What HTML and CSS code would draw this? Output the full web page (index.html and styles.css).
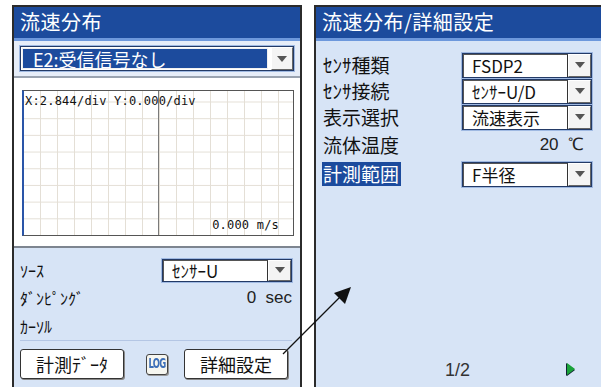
FILE: index.html
```html
<!DOCTYPE html>
<html lang="ja">
<head>
  <meta charset="UTF-8" />
  <meta name="viewport" content="width=device-width, initial-scale=1.0" />
  <title>流速分布</title>
  <link rel="stylesheet" href="styles.css">
</head>
<body>
  <div class="screens">
    <div class="panel left">
      <div class="title">流速分布</div>
      <div class="error-row">
        <div class="combo wide">
          <span class="combo-text selected">E2:受信信号なし</span>
          <span class="combo-btn"><i class="tri"></i></span>
        </div>
      </div>
      <div class="graph-area">
        <div class="graph">
          <span class="scale">X:2.844/div Y:0.000/div</span>
          <span class="reading">0.000 m/s</span>
        </div>
      </div>
      <div class="settings">
        <div class="row">
          <span class="label">ｿｰｽ</span>
          <div class="combo small">
            <span class="combo-text">ｾﾝｻｰU</span>
            <span class="combo-btn"><i class="tri"></i></span>
          </div>
        </div>
        <div class="row">
          <span class="label">ﾀﾞﾝﾋﾟﾝｸﾞ</span>
          <span class="value">0&nbsp; sec</span>
        </div>
        <div class="row">
          <span class="label">ｶｰｿﾙ</span>
        </div>
        <div class="buttons">
          <button class="key">計測ﾃﾞｰﾀ</button>
          <span class="log"><span>LOG</span></span>
          <button class="key">詳細設定</button>
        </div>
      </div>
    </div>

    <div class="panel right">
      <div class="title">流速分布/詳細設定</div>
      <div class="detail">
        <div class="field">
          <span class="label big">ｾﾝｻ種類</span>
          <div class="combo">
            <span class="combo-text">FSDP2</span>
            <span class="combo-btn"><i class="tri"></i></span>
          </div>
        </div>
        <div class="field">
          <span class="label big">ｾﾝｻ接続</span>
          <div class="combo">
            <span class="combo-text">ｾﾝｻｰU/D</span>
            <span class="combo-btn"><i class="tri"></i></span>
          </div>
        </div>
        <div class="field">
          <span class="label big">表示選択</span>
          <div class="combo">
            <span class="combo-text">流速表示</span>
            <span class="combo-btn"><i class="tri"></i></span>
          </div>
        </div>
        <div class="field temp">
          <span class="label big">流体温度</span>
          <span class="value">20&nbsp; ℃</span>
        </div>
        <div class="field range">
          <span class="label big focus">計測範囲</span>
          <div class="combo">
            <span class="combo-text">F半径</span>
            <span class="combo-btn"><i class="tri"></i></span>
          </div>
        </div>
      </div>
      <div class="pager">
        <span class="page">1/2</span>
        <span class="next"></span>
      </div>
    </div>
  </div>

  <svg class="arrow" width="601" height="387" viewBox="0 0 601 387">
    <line x1="283" y1="354" x2="342" y2="295" stroke="#111" stroke-width="1.2" />
    <polygon points="351,287 334,293 345,304" fill="#111" />
  </svg>
</body>
</html>
```

FILE: styles.css
```css
* {
  box-sizing: border-box;
}

body {
  margin: 0;
  width: 601px;
  height: 387px;
  overflow: hidden;
  background: #fff;
  font-family: "Noto Sans CJK JP", "Noto Sans", sans-serif;
  color: #111;
  position: relative;
}

.screens {
  display: flex;
  gap: 12px;
  padding: 5px 0 0 12px;
}

.panel {
  border: 2px solid #2b2b2b;
  border-bottom: none;
  height: 400px;
  display: flex;
  flex-direction: column;
}

.panel.left {
  width: 290px;
  flex: none;
}

.panel.right {
  width: 300px;
  flex: none;
  background: #d7e4f6;
}

.title {
  height: 34px;
  flex: none;
  background: #1c4b9d;
  border-bottom: 3px solid #6d98dc;
  color: #fff;
  font-size: 20px;
  line-height: 30px;
  padding-left: 6px;
  letter-spacing: 0.5px;
}

.error-row {
  flex: none;
  background: #e6edf8;
  padding: 5px 6px 0 6px;
  height: 37px;
  border-bottom: 2px solid #9aa3b0;
}

.combo {
  display: flex;
  height: 25px;
  width: 130px;
  border: 1px solid #233a66;
  background: #fff;
  box-shadow: 0 0 0 1px #9fb9e2;
}

.combo.wide {
  width: 274px;
  height: 25px;
}

.combo.small {
  width: 130px;
  height: 23px;
}

.combo-text {
  flex: 1;
  display: flex;
  align-items: center;
  font-size: 17px;
  line-height: 1;
  padding-left: 8px;
  border-right: 1px solid #333;
  border-top: 1px solid #555;
  border-left: 1px solid #555;
  white-space: nowrap;
}

.combo-text.selected {
  background: #1c4b9d;
  color: #fff;
  margin: 1px 3px 1px 1px;
  border: 1px solid #f0f0f0;
  padding-left: 10px;
  font-size: 18px;
}

.combo-btn {
  width: 23px;
  flex: none;
  background: #f4f4f4;
  border: 1px solid #fff;
  border-right-color: #666;
  border-bottom-color: #666;
  display: flex;
  align-items: center;
  justify-content: center;
}

.combo.wide .combo-btn {
  width: 22px;
}

.tri {
  width: 0;
  height: 0;
  border-left: 5px solid transparent;
  border-right: 5px solid transparent;
  border-top: 6px solid #555;
}

.graph-area {
  flex: none;
  background: #fff;
  height: 170px;
  padding: 12px 6px 0 8px;
  border-bottom: 2px solid #7d8590;
}

.graph {
  position: relative;
  height: 146px;
  border: 1px solid #555;
  border-left: 2px solid #2a55a8;
  background-color: #fff;
  background-image:
    linear-gradient(to right, #e4dfd6 1px, transparent 1px),
    linear-gradient(to bottom, #e4dfd6 1px, transparent 1px);
  background-size: 17px 100%, 100% 16.7px;
  background-position: -1px 0, 0 bottom;
  font-family: "DejaVu Sans Mono", monospace;
  font-size: 12px;
}

.graph::after {
  content: "";
  position: absolute;
  left: 134px;
  top: 0;
  bottom: 0;
  width: 1px;
  background: #7a7a7a;
}

.scale {
  position: absolute;
  left: 1px;
  top: 3px;
  letter-spacing: 0.2px;
}

.reading {
  position: absolute;
  right: 14px;
  bottom: 3px;
  letter-spacing: 0.2px;
}

.settings {
  flex: 1;
  background: #d7e4f6;
  padding: 8px 8px 0 6px;
}

.row {
  height: 28px;
  display: flex;
  align-items: center;
  justify-content: space-between;
}

.label {
  font-size: 16px;
}

.label.big {
  font-size: 19px;
  line-height: 24px;
}

.value {
  font-family: "Liberation Sans", sans-serif;
  font-size: 17px;
  color: #222;
}

.buttons {
  border-top: 1px solid #b4c6e4;
  padding-top: 8px;
  display: flex;
  align-items: center;
}

.key {
  height: 30px;
  width: 104px;
  background: #fff;
  border: 1px solid #333;
  border-radius: 3px;
  box-shadow: 1px 1px 0 #888;
  font-family: "Noto Sans CJK JP", sans-serif;
  font-size: 18px;
  line-height: 26px;
  padding: 0;
  color: #111;
}

.log {
  margin: 0 16px 0 22px;
  width: 22px;
  height: 21px;
  border: 1px solid #444;
  border-radius: 3px;
  background: #f6f6f0;
  box-shadow: 1px 1px 0 #999;
  color: #3d6fb8;
  font-family: "DejaVu Sans Condensed", "DejaVu Sans", sans-serif;
  font-weight: bold;
  font-size: 9px;
  line-height: 19px;
  text-align: center;
  letter-spacing: -0.8px;
  overflow: hidden;
}

.log span {
  display: inline-block;
  transform: scale(1.05, 1.5);
}

.detail {
  padding: 11px 20px 0 7px;
}

.field {
  height: 26px;
  display: flex;
  align-items: center;
  justify-content: space-between;
}

.field .combo {
  height: 25px;
}

.field.temp {
  height: 29px;
  padding-right: 8px;
}

.field.range {
  margin-top: 2px;
}

.focus {
  background: #1c4b9d;
  color: #fff;
  padding: 0 2px 0 1px;
  margin-left: -1px;
}

.pager {
  margin-top: auto;
  height: 45px;
  display: flex;
  align-items: flex-start;
}

.page {
  margin-left: 129px;
  font-family: "Liberation Sans", sans-serif;
  font-size: 18px;
  color: #333;
}

.next {
  margin-left: 97px;
  margin-top: 3px;
  width: 0;
  height: 0;
  border-top: 6px solid transparent;
  border-bottom: 6px solid transparent;
  border-left: 8px solid #1aa33a;
  filter: drop-shadow(-1px 0 0 #123) drop-shadow(0 1px 0 #123);
}

.arrow {
  position: absolute;
  left: 0;
  top: 0;
  pointer-events: none;
}
```
